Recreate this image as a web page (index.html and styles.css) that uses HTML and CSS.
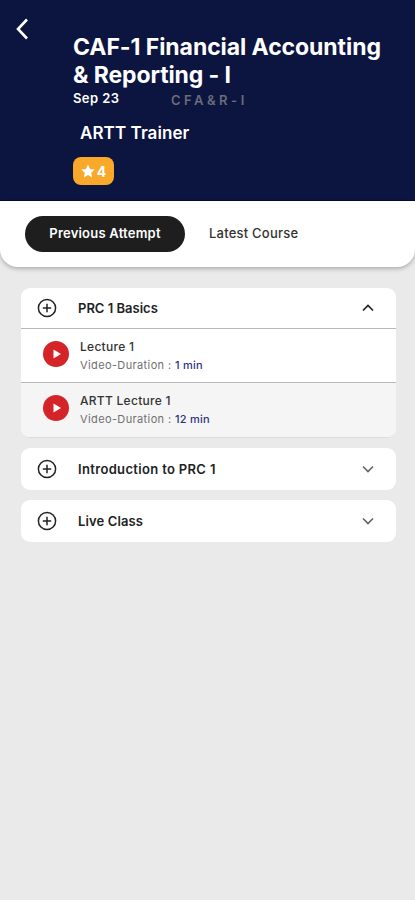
FILE: index.html
```html
<!DOCTYPE html>
<html lang="en">
<head>
<meta charset="utf-8">
<title>CAF-1 Financial Accounting &amp; Reporting - I</title>
<link rel="stylesheet" href="styles.css">
</head>
<body>
<header class="hero">
  <svg class="back" viewBox="0 0 14 22"><path d="M12 1.500 3 11l9 9.500"/></svg>
  <div class="info">
    <h1><span class="t1">CAF-1 Financial Accounting</span><br><span class="t2">&amp; Reporting - I</span></h1>
    <div class="meta"><span class="date">Sep 23</span><span class="code">CFA&amp;R-I</span></div>
    <div class="trainer"><span>ARTT Trainer</span></div>
    <div class="rating"><svg viewBox="0 0 24 24"><path d="M12 .8l3.400 7.600 8.200.9-6.100 5.600 1.700 8.100L12 18.900 4.800 23l1.700-8.100L.4 9.300l8.200-.9z"/></svg><span>4</span></div>
  </div>
</header>
<nav class="tabs">
  <button class="tab active"><span>Previous Attempt</span></button>
  <button class="tab plain"><span>Latest Course</span></button>
</nav>
<main class="list">
  <section class="card open">
    <div class="head">
      <svg class="plus" viewBox="0 0 20 20"><circle cx="10" cy="10" r="8.600"/><path d="M10 5.800v8.400M5.800 10h8.400"/></svg>
      <span class="label">PRC 1 Basics</span>
      <svg class="chev dark" viewBox="0 0 14 8"><path d="M2 6.500 7 1.500l5 5"/></svg>
    </div>
    <div class="lecture">
      <svg class="play" viewBox="0 0 26 26"><circle cx="13" cy="13" r="13"/><path d="M10.500 8.500v9l7.500-4.500z"/></svg>
      <div class="text"><div class="name">Lecture 1</div><div class="dur">Video-Duration : <b>1 min</b></div></div>
    </div>
    <div class="lecture shade">
      <svg class="play" viewBox="0 0 26 26"><circle cx="13" cy="13" r="13"/><path d="M10.500 8.500v9l7.500-4.500z"/></svg>
      <div class="text"><div class="name">ARTT Lecture 1</div><div class="dur">Video-Duration : <b>12 min</b></div></div>
    </div>
  </section>
  <section class="card">
    <div class="head">
      <svg class="plus" viewBox="0 0 20 20"><circle cx="10" cy="10" r="8.600"/><path d="M10 5.800v8.400M5.800 10h8.400"/></svg>
      <span class="label intro">Introduction to PRC 1</span>
      <svg class="chev" viewBox="0 0 14 8"><path d="M2 1.500 7 6.500l5-5"/></svg>
    </div>
  </section>
  <section class="card">
    <div class="head">
      <svg class="plus" viewBox="0 0 20 20"><circle cx="10" cy="10" r="8.600"/><path d="M10 5.800v8.400M5.800 10h8.400"/></svg>
      <span class="label live">Live Class</span>
      <svg class="chev" viewBox="0 0 14 8"><path d="M2 1.500 7 6.500l5-5"/></svg>
    </div>
  </section>
</main>
</body>
</html>
```
FILE: styles.css
```css
* { box-sizing: border-box; }
body {
  margin: 0;
  min-height: 900px;
  background: #eaeaea;
  font-family: Inter, "Liberation Sans", sans-serif;
  white-space: nowrap;
}
svg { display: block; flex: none; fill: none; }
.hero {
  height: 201px;
  background: #0c1440;
  color: #fff;
  display: flex;
  padding-left: 15px;
  border-bottom: 1px solid #080b28;
}
.back { width: 14px; height: 22px; margin-top: 18px; stroke: #fff; stroke-width: 2.6; }
.info { margin-left: 44px; padding-top: 33px; }
h1 { margin: 0; font-size: 23px; line-height: 28px; font-weight: 700; }
.t1 { letter-spacing: -0.07px; }
.t2 { letter-spacing: -0.1px; }
.meta { display: flex; height: 20px; }
.date { width: 98px; font-size: 13px; line-height: 18px; font-weight: 600; letter-spacing: .4px; }
.code { font-size: 13px; line-height: 23px; font-weight: 600; letter-spacing: 3.5px; color: #6a6c7a; }
.trainer { padding-left: 7px; margin-top: 11px; font-size: 17px; line-height: 26px; font-weight: 600; letter-spacing: .08px; }
.rating {
  width: 41px; height: 28px; margin-top: 11px;
  border-radius: 8px; background: #faa82a;
  display: flex; align-items: center; justify-content: center; gap: 2px;
  font-size: 14px; font-weight: 700;
}
.rating svg { width: 14px; height: 14px; fill: #fff; }
.tabs {
  height: 66px; display: flex; padding: 15px 25px; gap: 24px;
  background: #fff; border-radius: 0 0 18px 18px;
  box-shadow: 0 2px 4px rgba(0, 0, 0, .25);
}
.tab { border: 0; padding: 0 0 2px; background: none; font-family: inherit; height: 36px; line-height: 34px; color: #333; letter-spacing: .22px; }
.active { width: 160px; border-radius: 18px; background: #1e1e1e; color: #fff; font-size: 13px; font-weight: 600; }
.plain { font-size: 13px; font-weight: 500; }
.list { padding: 21px 19px 0 21px; display: flex; flex-direction: column; gap: 10px; }
.card { background: #fff; border-radius: 9px; overflow: hidden; }
.head { height: 42px; display: flex; align-items: center; padding: 0 21px 0 16px; }
.open .head { height: 40px; }
.open { height: 150px; border-bottom: 1px solid #dcdcdc; }
.plus { width: 20px; height: 20px; stroke: #222; stroke-width: 1.5; }
.label { margin-left: 21px; flex: 1; font-size: 13px; font-weight: 600; color: #222; padding-bottom: 1px; }
.intro { letter-spacing: .34px; }
.live { letter-spacing: .12px; }
.chev { width: 14px; height: 8px; stroke: #666; stroke-width: 1.7; }
.dark { stroke: #222; }
.lecture { height: 54px; border-top: 1px solid #b8b8b8; display: flex; align-items: center; padding: 0 0 3px 22px; }
.shade { height: 56px; padding-bottom: 5px; background: #f5f5f5; }
.play { width: 26px; height: 26px; }
.play circle { fill: #d52427; }
.play path { fill: #fff; }
.text { margin-left: 11px; padding-top: 3px; }
.name { font-size: 12px; line-height: 18px; font-weight: 500; color: #333; letter-spacing: .28px; }
.dur { font-size: 11px; line-height: 18px; color: #707070; letter-spacing: .38px; }
.dur b { font-weight: 500; color: #303080; letter-spacing: .25px; }
```
